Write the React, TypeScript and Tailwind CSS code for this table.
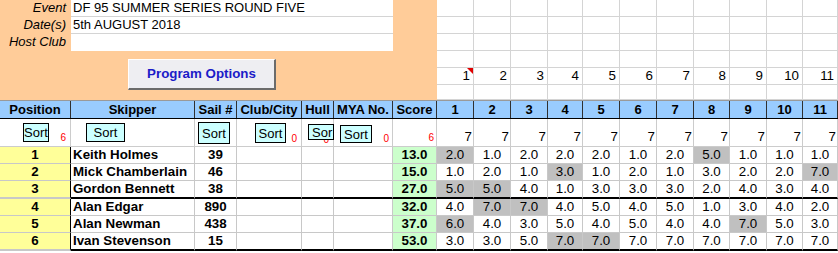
import React from 'react';

const COLS = 'grid grid-cols-[71px_124px_42px_65px_32px_59px_44px_37px_37px_37px_35px_37px_37px_37px_36px_37px_36px_35px]';
const NARROW = "font-['Liberation_Sans_Narrow','Arial_Narrow','Liberation_Sans',sans-serif]";

const headers = ['Position', 'Skipper', 'Sail #', 'Club/City', 'Hull', 'MYA No.', 'Score', '1', '2', '3', '4', '5', '6', '7', '8', '9', '10', '11'];
const races = ['1', '2', '3', '4', '5', '6', '7', '8', '9', '10', '11'];

type Result = { pos: number; name: string; sail: string; score: string; races: number[]; discards: number[]; split?: boolean };

const results: Result[] = [
    { pos: 1, name: 'Keith Holmes', sail: '39', score: '13.0', races: [2, 1, 2, 2, 2, 1, 2, 5, 1, 1, 1], discards: [0, 7] },
    { pos: 2, name: 'Mick Chamberlain', sail: '46', score: '15.0', races: [1, 2, 1, 3, 1, 2, 1, 3, 2, 2, 7], discards: [3, 10] },
    { pos: 3, name: 'Gordon Bennett', sail: '38', score: '27.0', races: [5, 5, 4, 1, 3, 3, 3, 2, 4, 3, 4], discards: [0, 1], split: true },
    { pos: 4, name: 'Alan Edgar', sail: '890', score: '32.0', races: [4, 7, 7, 4, 5, 4, 5, 1, 3, 4, 2], discards: [1, 2] },
    { pos: 5, name: 'Alan Newman', sail: '438', score: '37.0', races: [6, 4, 3, 5, 4, 5, 4, 4, 7, 5, 3], discards: [0, 8] },
    { pos: 6, name: 'Ivan Stevenson', sail: '15', score: '53.0', races: [3, 3, 5, 7, 7, 7, 7, 7, 7, 7, 7], discards: [3, 4], split: true },
];

const SortButton: React.FC<{ className: string; label?: string }> = ({ className, label = 'Sort' }) => (
    <div className={`absolute flex items-center justify-center overflow-hidden border border-black bg-[#ccffff] text-[13px] leading-none text-black ${NARROW} ${className}`}>
        {label}
    </div>
);

const InfoRow: React.FC<{ label: string; value: string; last?: boolean }> = ({ label, value, last }) => (
    <div className="flex h-[17px]">
        <div className="w-[71px] pr-[5px] text-right text-[13px] italic leading-[16px]">{label}</div>
        <div className={`w-[322px] bg-white pl-[2px] text-[13px] leading-[16px] ${last ? '' : 'border-b border-[#d4d4d4]'}`}>{value}</div>
    </div>
);

const App: React.FC = () => {
    return (
        <div className="w-[838px] h-[253px] overflow-hidden bg-white text-black font-['Liberation_Sans',Arial,sans-serif]">
            {/* event details + race number ruler */}
            <div className="flex h-[100px]">
                <div className="w-[437px] bg-[#ffcc99]">
                    <InfoRow label="Event" value="DF 95 SUMMER SERIES ROUND FIVE" />
                    <InfoRow label="Date(s)" value="5th AUGUST 2018" />
                    <InfoRow label="Host Club" value="" last />
                    <button className="ml-[128px] mt-[8px] h-[31px] w-[148px] border-l border-t border-white border-r-2 border-b-2 border-r-[#6b6b6b] border-b-[#6b6b6b] bg-[#eeeef2] text-[13.33px] font-bold text-[#1c1cc8]">
                        Program Options
                    </button>
                </div>
                <div className="grid flex-1 grid-cols-[37px_37px_37px_35px_37px_37px_37px_36px_37px_36px_35px] grid-rows-[17px_17px_17px_17px_17px_15px]">
                    {[0, 1, 2, 3, 4, 5].map(r =>
                        races.map((n, i) => (
                            <div key={`${r}-${i}`} className={`relative border-r border-b border-[#d4d4d4] pr-[3px] text-right text-[13.33px] leading-[16px] ${NARROW}`}>
                                {r === 4 ? n : ''}
                                {r === 4 && i === 0 && (
                                    <span className="absolute right-0 top-0 h-0 w-0 border-l-[6px] border-t-[6px] border-l-transparent border-t-[#e00000]" />
                                )}
                            </div>
                        ))
                    )}
                </div>
            </div>

            {/* column headers */}
            <div className={`${COLS} h-[19px] border-t border-b border-t-[#9a9a9a] border-b-black bg-[#99ccff]`}>
                {headers.map(h => (
                    <div key={h} className="whitespace-nowrap border-r border-[#303030] text-center text-[13px] font-bold leading-[17px]">
                        {h}
                    </div>
                ))}
            </div>

            {/* sort controls */}
            <div className={`${COLS} h-[28px] border-b border-[#cccccc]`}>
                <div className="relative flex items-end justify-end border-r border-[#cccccc] pr-[4px] pb-[3px] text-[10px] leading-none text-[#ff0000]">
                    6
                    <SortButton className="left-[23px] top-[4px] h-[19px] w-[26px]" />
                </div>
                <div className="relative border-r border-[#cccccc]">
                    <SortButton className="left-[15px] top-[4px] h-[19px] w-[39px]" />
                </div>
                <div className="relative border-r border-[#cccccc]">
                    <SortButton className="left-[3px] top-[3px] h-[22px] w-[32px]" />
                </div>
                <div className="relative flex items-end justify-end border-r border-[#cccccc] pr-[4px] pb-[2px] text-[10px] leading-none text-[#ff0000]">
                    0
                    <SortButton className="left-[18px] top-[4px] h-[20px] w-[31px]" />
                </div>
                <div className="relative flex items-end justify-end border-r border-[#cccccc] pr-[4px] pb-[1px] text-[10px] leading-none text-[#ff0000]">
                    0
                    <SortButton className="left-[6px] top-[5px] h-[16px] w-[26px] !justify-start pl-[3px]" label="Sor" />
                </div>
                <div className="relative flex items-end justify-end border-r border-[#cccccc] pr-[3px] pb-[2px] text-[10px] leading-none text-[#ff0000]">
                    0
                    <SortButton className="left-[6px] top-[6px] h-[18px] w-[32px]" />
                </div>
                <div className="flex items-end justify-end border-r border-[#cccccc] pr-[2px] pb-[3px] text-[10px] leading-none text-[#ff0000]">
                    6
                </div>
                {races.map(n => (
                    <div key={n} className={`flex items-end justify-end border-r border-[#cccccc] pr-[1px] pb-[3px] text-[13.33px] leading-none ${NARROW}`}>
                        7
                    </div>
                ))}
            </div>

            {/* results */}
            {results.map(r => {
                const line = r.split ? 'h-[18px] border-b-2 border-b-black' : 'h-[17px] border-b border-b-[#c8c8c8]';
                return (
                    <div key={r.pos} className={`${COLS}`}>
                        <div className={`border-r border-r-black bg-[#ffff99] text-center text-[13.33px] font-bold leading-[16px] ${r.split ? 'h-[18px] border-b-2 border-b-[#c8c8c8]' : 'h-[17px] border-b border-b-[#c8c8c8]'}`}>
                            {r.pos}
                        </div>
                        <div className={`${line} border-r border-r-[#c8c8c8] pl-[2px] whitespace-nowrap text-[13.33px] font-bold leading-[16px]`}>{r.name}</div>
                        <div className={`${line} border-r border-r-[#c8c8c8] text-center text-[13.33px] font-bold leading-[16px]`}>{r.sail}</div>
                        <div className={`${line} border-r border-r-[#c8c8c8]`} />
                        <div className={`${line} border-r border-r-[#c8c8c8]`} />
                        <div className={`${line} border-r border-r-[#c8c8c8]`} />
                        <div className={`${line} border-r border-r-[#c8c8c8] bg-[#ccffcc] text-center text-[13.33px] font-bold leading-[16px]`}>{r.score}</div>
                        {r.races.map((v, i) => (
                            <div
                                key={i}
                                className={`${line} border-r border-r-[#c8c8c8] text-center text-[13.33px] leading-[16px] ${NARROW} ${r.discards.includes(i) ? 'bg-[#c0c0c0]' : ''}`}
                            >
                                {v.toFixed(1)}
                            </div>
                        ))}
                    </div>
                );
            })}
        </div>
    );
};

export default App;
